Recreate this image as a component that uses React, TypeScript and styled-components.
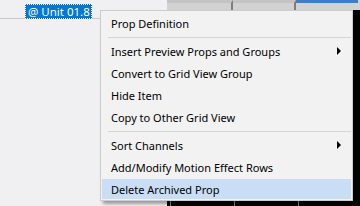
import styled, { createGlobalStyle } from 'styled-components'

const GlobalStyle = createGlobalStyle`
  html, body {
    margin: 0;
    padding: 0;
  }
  body {
    font-family: "Noto Sans", "Liberation Sans", Arial, sans-serif;
    font-size: 11px;
  }
`

type Item = { label: string; submenu?: boolean; active?: boolean } | 'sep'

const items: Item[] = [
  { label: 'Prop Definition' },
  'sep',
  { label: 'Insert Preview Props and Groups', submenu: true },
  { label: 'Convert to Grid View Group' },
  { label: 'Hide Item' },
  { label: 'Copy to Other Grid View' },
  'sep',
  { label: 'Sort Channels', submenu: true },
  { label: 'Add/Modify Motion Effect Rows' },
  { label: 'Delete Archived Prop', active: true },
]

export default function App() {
  return (
    <>
      <GlobalStyle />
      <Page>
        <LeftPane>
          <TreeHeader>
            <SelectedLabel>@ Unit 01.8</SelectedLabel>
          </TreeHeader>
        </LeftPane>
        <GridPane>
          <TopStrip>
            <TopCell $width={66} />
            <TopCell $width={63} />
            <TopCell $width={62} $selected />
          </TopStrip>
          <GridBody>
            <BodyColumn $width={63} />
            <BodyColumn $width={63} />
            <BodyColumn $width={62} />
          </GridBody>
        </GridPane>
        <EdgeStrip />

        <Menu>
          {items.map((item, i) =>
            item === 'sep' ? (
              <Separator key={i} />
            ) : (
              <MenuItem key={i} $active={item.active}>
                <span>{item.label}</span>
                {item.submenu && <Arrow />}
              </MenuItem>
            )
          )}
        </Menu>
      </Page>
    </>
  )
}

const Page = styled.div`
  position: relative;
  display: flex;
  flex-direction: row;
  width: 360px;
  height: 206px;
  overflow: hidden;
  background: #f0f0f0;
`

const LeftPane = styled.div`
  width: 167px;
  flex-shrink: 0;
  background: #f0f0f2;
`

const TreeHeader = styled.div`
  height: 19px;
  border-bottom: 1px solid #c9c9cc;
  padding: 4px 0 0 25px;
  box-sizing: border-box;
`

const SelectedLabel = styled.span`
  display: inline-flex;
  align-items: center;
  height: 15px;
  padding: 0 2px 0 3px;
  background: #0078d7;
  color: #ffffff;
  outline: 1px dotted #ffffff;
  outline-offset: -1px;
  font-size: 11.5px;
  line-height: 15px;
`

const GridPane = styled.div`
  flex: 1;
  display: flex;
  flex-direction: column;
`

const TopStrip = styled.div`
  display: flex;
  height: 10px;
  background: #d2d2d2;
`

const TopCell = styled.div<{ $width: number; $selected?: boolean }>`
  width: ${({ $width }) => $width}px;
  box-sizing: border-box;
  border-right: 2px solid #7d7d7d;
  border-top: 3px solid ${({ $selected }) => ($selected ? '#3f7dc8' : '#c4c4c4')};
  &:last-child {
    border-right: none;
  }
`

const GridBody = styled.div`
  flex: 1;
  display: flex;
  padding-left: 3px;
  background: #050505;
`

const BodyColumn = styled.div<{ $width: number }>`
  width: ${({ $width }) => $width}px;
  border-left: 1px solid #8a8a8a;
`

const EdgeStrip = styled.div`
  width: 2px;
  background: #c8c8c8;
`

const Menu = styled.div`
  position: absolute;
  left: 100px;
  top: 10px;
  width: 253px;
  box-sizing: border-box;
  padding: 1px 1px 0;
  background: #f2f2f2;
  border: 1px solid #cccccc;
  box-shadow: 3px 3px 3px rgba(0, 0, 0, 0.35);
  color: #000000;
`

const MenuItem = styled.div<{ $active?: boolean }>`
  position: relative;
  display: flex;
  align-items: center;
  justify-content: space-between;
  height: 22px;
  padding: 0 9px 0 9px;
  box-sizing: border-box;
  font-size: 11px;
  border-top: 1px solid transparent;
  border-bottom: 1px solid transparent;
  background: ${({ $active }) => ($active ? '#c9def5' : 'transparent')};
  background-clip: padding-box;
`

const Separator = styled.div`
  height: 6px;
  display: flex;
  align-items: center;
  padding-left: 6px;

  &::after {
    content: '';
    flex: 1;
    height: 1px;
    background: #d4d4d8;
  }
`

const Arrow = styled.span`
  width: 0;
  height: 0;
  border-top: 4px solid transparent;
  border-bottom: 4px solid transparent;
  border-left: 4px solid #000000;
  margin-right: 1px;
`
